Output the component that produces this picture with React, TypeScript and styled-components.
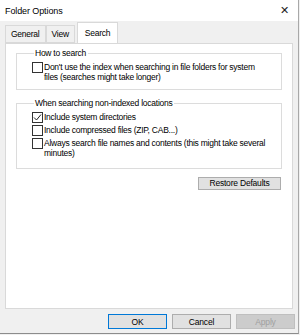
import React, { ReactElement } from 'react'
import styled, { createGlobalStyle } from 'styled-components'

const GlobalStyle = createGlobalStyle`
  html, body {
    margin: 0;
    padding: 0;
    background: #f0f0f0;
  }
  * {
    box-sizing: border-box;
  }
`

const Window = styled.div`
  width: 299px;
  height: 334px;
  background: #f0f0f0;
  border-right: 1px solid #a8a8a8;
  border-bottom: 1px solid #8c8c8c;
  display: flex;
  flex-direction: column;
  font-family: 'Liberation Sans', Arial, sans-serif;
  font-size: 8.5px;
  letter-spacing: -0.25px;
  color: #000;
`

const TitleBar = styled.div`
  height: 21px;
  background: #fff;
  display: flex;
  align-items: center;
  justify-content: space-between;
  padding: 0 9px 0 5px;
  font-size: 9px;
  letter-spacing: -0.1px;
`

const Close = styled.span`
  font-size: 11px;
  color: #222;
`

const Body = styled.div`
  flex: 1;
  display: flex;
  flex-direction: column;
  padding: 2px 5px 0 5px;
`

const TabStrip = styled.div`
  display: flex;
  align-items: flex-end;
  height: 20px;
  position: relative;
  z-index: 1;
`

const Tab = styled.div<{ $active?: boolean }>`
  height: ${(p) => (p.$active ? '21px' : '18px')};
  padding: 0 ${(p) => (p.$active ? '7px' : '5px')};
  margin-left: ${(p) => (p.$active ? '2px' : '0')};
  display: flex;
  align-items: center;
  background: ${(p) => (p.$active ? '#fff' : '#f0f0f0')};
  border: 1px solid #d9d9d9;
  border-bottom: ${(p) => (p.$active ? 'none' : '1px solid #d9d9d9')};
  & + & {
    border-left: ${(p) => (p.$active ? '1px solid #d9d9d9' : 'none')};
  }
`

const Panel = styled.div`
  height: 266px;
  background: #fff;
  border: 1px solid #d9d9d9;
  padding: 4px 10px 0 10px;
  display: flex;
  flex-direction: column;
`

const Group = styled.fieldset<{ $bottom: number }>`
  margin: 0;
  padding: 4px 0 ${(p) => p.$bottom}px 15px;
  border: 1px solid #dcdcdc;
  & + & {
    margin-top: 8px;
  }
`

const Legend = styled.legend`
  padding: 0 2px 0 1px;
  margin-left: 2px;
  line-height: 10px;
`

const Row = styled.label`
  display: flex;
  align-items: flex-start;
  line-height: 10px;
  & + & {
    margin-top: 2px;
  }
`

const Box = styled.span`
  flex: none;
  width: 11px;
  height: 11px;
  margin-right: 1px;
  border: 1px solid #333;
  background: #fff;
  display: flex;
  align-items: center;
  justify-content: center;
`

const RowText = styled.span`
  padding-right: 14px;
`

const PanelFooter = styled.div`
  display: flex;
  justify-content: flex-end;
  padding-top: 8px;
  padding-right: 1px;
`

const Button = styled.button<{ $default?: boolean; $disabled?: boolean }>`
  font-family: inherit;
  font-size: 8.5px;
  letter-spacing: -0.2px;
  height: 15px;
  padding: 0;
  background: ${(p) => (p.$disabled ? '#cccccc' : '#e1e1e1')};
  color: ${(p) => (p.$disabled ? '#a0a0a0' : '#000')};
  border: 1px solid ${(p) => (p.$default ? '#0078d7' : p.$disabled ? '#bfbfbf' : '#adadad')};
  border-radius: 0;
`

const WideButton = styled(Button)`
  width: 83px;
  height: 13px;
  line-height: 11px;
`

const DialogButtons = styled.div`
  display: flex;
  justify-content: flex-end;
  gap: 5px;
  padding-top: 5px;
  margin-right: -2px;
  & > ${Button} {
    width: 59px;
  }
`

function Check({ checked }: { checked?: boolean }): ReactElement {
  return (
    <Box>
      {checked && (
        <svg width="9" height="9" viewBox="0 0 9 9">
          <path d="M1 4.5 L3.5 7 L8 1.5" fill="none" stroke="#222" strokeWidth="1" />
        </svg>
      )}
    </Box>
  )
}

export default function App(): ReactElement {
  return (
    <>
      <GlobalStyle />
      <Window>
        <TitleBar>
          <span>Folder Options</span>
          <Close>✕</Close>
        </TitleBar>
        <Body>
          <TabStrip>
            <Tab>General</Tab>
            <Tab>View</Tab>
            <Tab $active>Search</Tab>
          </TabStrip>
          <Panel>
            <Group $bottom={7}>
              <Legend>How to search</Legend>
              <Row>
                <Check />
                <RowText>
                  Don't use the index when searching in file folders for system files (searches
                  might take longer)
                </RowText>
              </Row>
            </Group>
            <Group $bottom={10}>
              <Legend>When searching non-indexed locations</Legend>
              <Row>
                <Check checked />
                <RowText>Include system directories</RowText>
              </Row>
              <Row>
                <Check />
                <RowText>Include compressed files (ZIP, CAB...)</RowText>
              </Row>
              <Row>
                <Check />
                <RowText>
                  Always search file names and contents (this might take several minutes)
                </RowText>
              </Row>
            </Group>
            <PanelFooter>
              <WideButton>Restore Defaults</WideButton>
            </PanelFooter>
          </Panel>
          <DialogButtons>
            <Button $default>OK</Button>
            <Button>Cancel</Button>
            <Button $disabled>Apply</Button>
          </DialogButtons>
        </Body>
      </Window>
    </>
  )
}
